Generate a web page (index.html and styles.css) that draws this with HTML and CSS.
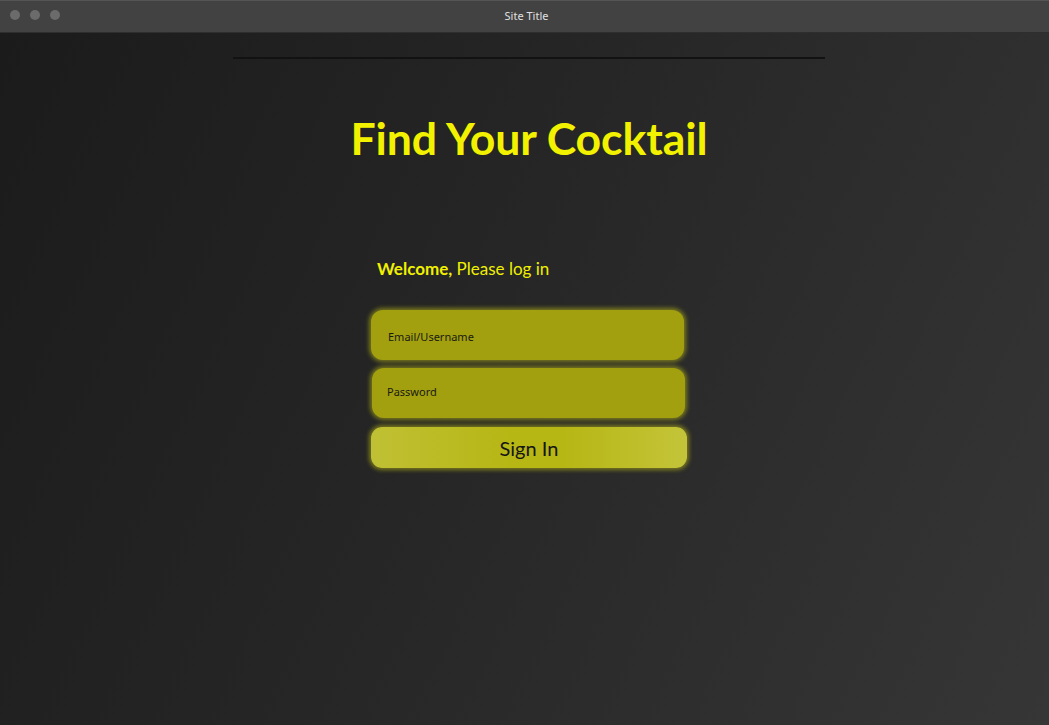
FILE: index.html
```html
<!DOCTYPE html>
<html lang="en">
<head>
<meta charset="utf-8">
<title>Site Title</title>
<link rel="stylesheet" href="styles.css">
</head>
<body>
<div class="window">
  <header class="titlebar">
    <div class="dots"><span class="dot"></span><span class="dot"></span><span class="dot"></span></div>
    <div class="site-title">Site Title</div>
  </header>
  <main class="page">
    <div class="content">
      <hr class="rule">
      <h1 class="headline">Find Your Cocktail</h1>
      <form class="login">
        <p class="welcome"><strong>Welcome,</strong> Please log in</p>
        <input class="field field-email" type="text" placeholder="Email/Username">
        <input class="field field-pass" type="password" placeholder="Password">
        <button class="signin" type="button">Sign In</button>
      </form>
    </div>
  </main>
</div>
</body>
</html>
```
FILE: styles.css
```css
* { box-sizing: border-box; }
html, body { margin: 0; padding: 0; height: 100%; }
body {
  font-family: "Source Sans Pro", Lato, "Liberation Sans", sans-serif;
  background: #1c1c1c;
}
.window {
  width: 1049px;
  height: 725px;
  display: flex;
  flex-direction: column;
  overflow: hidden;
}
.titlebar {
  height: 33px;
  flex: none;
  background: #424242;
  border-top: 1px solid #555;
  border-bottom: 1px solid #2e2e2e;
  position: relative;
  display: flex;
  align-items: center;
  justify-content: center;
}
.dots {
  position: absolute;
  left: 10px;
  top: 9px;
  display: flex;
  gap: 10px;
}
.dot {
  width: 10px;
  height: 10px;
  border-radius: 50%;
  background: #6b6b6b;
}
.site-title {
  font-family: "Noto Sans", "Open Sans", sans-serif;
  font-size: 11px;
  color: #e0e0e0;
  margin-left: 4px;
  margin-top: -2px;
}
.page {
  flex: 1;
  background: linear-gradient(115deg, #1b1b1b 0%, #262626 45%, #363636 100%);
}
.content {
  width: 592px;
  margin-left: 233px;
  display: flex;
  flex-direction: column;
  align-items: center;
}
.rule {
  width: 100%;
  margin: 24px 0 0;
  border: 0;
  height: 2px;
  background: #121212;
}
.headline {
  margin: 49px 0 0;
  font-size: 44.6px;
  font-weight: 700;
  color: #f2f200;
  line-height: 60px;
  letter-spacing: -0.1px;
}
.login {
  margin-top: 88px;
  width: 316px;
  display: flex;
  flex-direction: column;
}
.welcome {
  margin: 0 0 28px 6px;
  font-size: 17px;
  line-height: 26px;
  color: #f0f000;
}
.welcome strong { font-weight: 700; }
.field {
  width: 313px;
  height: 50px;
  border: 0;
  outline: 0;
  border-radius: 12px;
  background: #a2a00e;
  box-shadow: 0 0 4px 2px rgba(190, 190, 20, 0.55);
  padding: 0 16px;
  font-family: "Noto Sans", "Open Sans", sans-serif;
  font-size: 11px;
  color: #151515;
}
.field::placeholder { color: #1a1a10; }
.field-email { padding-left: 17px; padding-top: 2px; }
.field-pass { margin-top: 8px; margin-left: 1px; padding-left: 15px; padding-bottom: 4px; }
.signin {
  margin-top: 9px;
  width: 316px;
  height: 41px;
  border: 0;
  border-radius: 11px;
  background: linear-gradient(90deg, #c0c035 0%, #b6b614 45%, #b6b614 60%, #c4c43a 100%);
  box-shadow: 0 0 4px 2px rgba(190, 190, 20, 0.55);
  font-family: "Source Sans Pro", Lato, "Liberation Sans", sans-serif;
  font-size: 20px;
  color: #151515;
  padding: 0;
  cursor: pointer;
}
```
